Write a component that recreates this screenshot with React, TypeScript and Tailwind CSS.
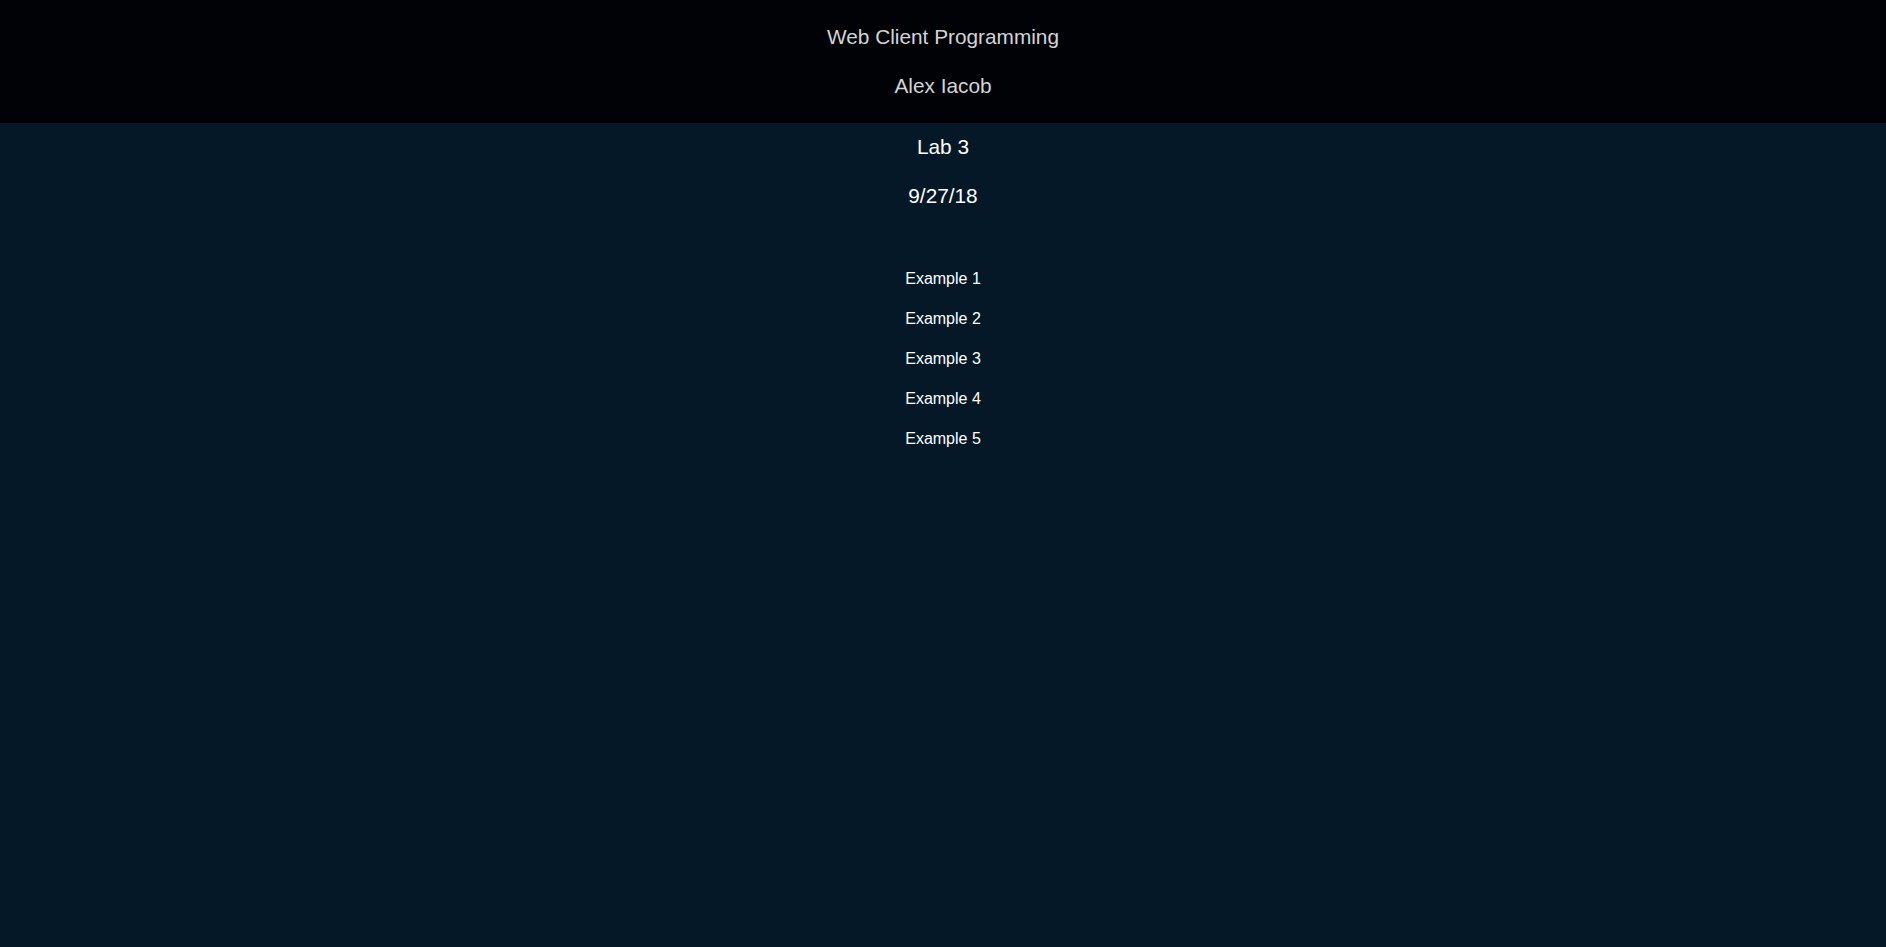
export default function App() {
  return (
    <div className="min-h-[947px] w-full bg-[#041828] font-['Liberation_Sans',Arial,sans-serif]">
      <header className="flex flex-col items-center gap-[26px] bg-[#000206] pt-[25px] pb-[26px] text-[20.8px] leading-[23px] text-[#d4d4d4]">
        <div>Web Client Programming</div>
        <div>Alex Iacob</div>
      </header>
      <main className="flex flex-col items-center pt-[12px] text-white">
        <div className="flex flex-col items-center gap-[26px] text-[20.8px] leading-[23px]">
          <div>Lab 3</div>
          <div>9/27/18</div>
        </div>
        <nav className="mt-[63px] flex flex-col items-center gap-[22px] text-[16px] leading-[18px]">
          <a href="#">Example 1</a>
          <a href="#">Example 2</a>
          <a href="#">Example 3</a>
          <a href="#">Example 4</a>
          <a href="#">Example 5</a>
        </nav>
      </main>
    </div>
  );
}
